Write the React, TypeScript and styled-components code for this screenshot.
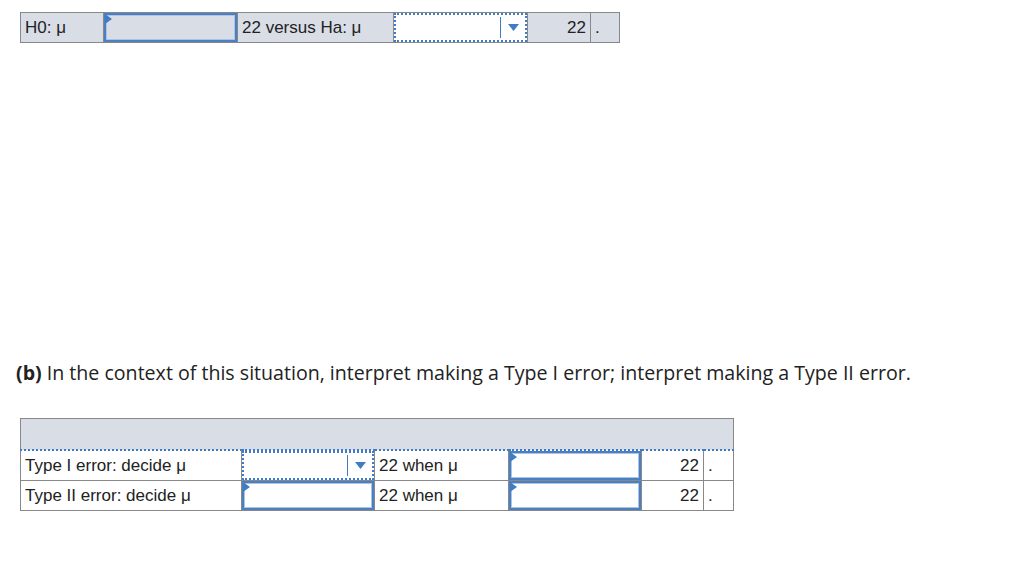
import React from 'react'
import styled, { createGlobalStyle } from 'styled-components'

const GlobalStyle = createGlobalStyle`
  body {
    margin: 0;
    background: #fff;
    font-family: "Liberation Sans", Arial, sans-serif;
    color: #222;
  }
`

const Caret = () => (
  <svg width="11" height="7" viewBox="0 0 11 7">
    <path d="M0 0 L11 0 L5.5 7 Z" fill="#3f7cc4" />
  </svg>
)

const App = () => {
  return (
    <Page>
      <GlobalStyle />
      <Table>
        <tbody>
          <tr>
            <Cell $w={83} $shade>H0: μ</Cell>
            <BoxCell $w={134} $shade>
              <Entry $shade />
            </BoxCell>
            <Cell $w={156} $shade>22 versus Ha: μ</Cell>
            <BoxCell $w={134}>
              <Select>
                <SelectField />
                <SelectButton>
                  <Caret />
                </SelectButton>
              </Select>
            </BoxCell>
            <Cell $w={63} $shade $right>22</Cell>
            <Cell $w={29} $shade>.</Cell>
          </tr>
        </tbody>
      </Table>

      <Question>
        <b>(b)</b> In the context of this situation, interpret making a Type I error; interpret making a Type II error.
      </Question>

      <Table>
        <tbody>
          <tr>
            <HeadCell colSpan={6} />
          </tr>
          <DottedRow>
            <Cell $w={221} $h={30}>Type I error: decide μ</Cell>
            <BoxCell $w={133}>
              <Select>
                <SelectField />
                <SelectButton>
                  <Caret />
                </SelectButton>
              </Select>
            </BoxCell>
            <Cell $w={134}>22 when μ</Cell>
            <BoxCell $w={133}>
              <Entry />
            </BoxCell>
            <Cell $w={62} $right>22</Cell>
            <Cell $w={30}>.</Cell>
          </DottedRow>
          <tr>
            <Cell $w={221} $h={30}>Type II error: decide μ</Cell>
            <BoxCell $w={133}>
              <Entry />
            </BoxCell>
            <Cell $w={134}>22 when μ</Cell>
            <BoxCell $w={133}>
              <Entry />
            </BoxCell>
            <Cell $w={62} $right>22</Cell>
            <Cell $w={30}>.</Cell>
          </tr>
        </tbody>
      </Table>
    </Page>
  )
}

export default App

const Page = styled.div`
  padding: 12px 20px;
  width: 1014px;
  box-sizing: border-box;
`

const Table = styled.table`
  border-collapse: collapse;
  border: 1px solid #888;
  table-layout: fixed;
`

const Cell = styled.td<{ $w: number; $h?: number; $shade?: boolean; $right?: boolean }>`
  width: ${p => p.$w}px;
  height: ${p => p.$h ?? 30}px;
  box-sizing: border-box;
  padding: 0 4px;
  border: 1px solid #888;
  background: ${p => (p.$shade ? '#d9dde6' : '#fff')};
  text-align: ${p => (p.$right ? 'right' : 'left')};
  font-size: 17px;
  line-height: 19px;
  white-space: nowrap;
  vertical-align: middle;
`

const BoxCell = styled(Cell)`
  padding: 0;
  position: relative;
`

const HeadCell = styled.td`
  height: 28px;
  background: #d9dde6;
  border: 1px solid #888;
  border-bottom: none;
`

const DottedRow = styled.tr`
  & > td {
    border-top: 2px dotted #3f7cc4;
  }
`

const Entry = styled.div<{ $shade?: boolean }>`
  position: absolute;
  inset: 0;
  border: 2px solid #4a80c2;
  box-shadow: inset 0 0 0 1px #a9c4e6;
  background: ${p => (p.$shade ? '#d9dde6' : '#fff')};
  &::before {
    content: '';
    position: absolute;
    left: -1px;
    top: -1px;
    border-top: 5px solid transparent;
    border-bottom: 5px solid transparent;
    border-left: 7px solid #3f7cc4;
  }
`

const Select = styled.div`
  position: absolute;
  inset: 0;
  display: flex;
  border: 2px dotted #3f7cc4;
  background: #fff;
`

const SelectField = styled.div`
  flex: 1;
`

const SelectButton = styled.div`
  width: 24px;
  margin: 2px 0;
  border-left: 1.5px solid #3f7cc4;
  display: flex;
  align-items: center;
  justify-content: center;
`

const Question = styled.p`
  margin: 318px 0 33px -4px;
  font-family: "Open Sans", Lato, sans-serif;
  font-size: 19.6px;
  line-height: 24px;
  color: #222;
  b {
    font-weight: 700;
  }
`
